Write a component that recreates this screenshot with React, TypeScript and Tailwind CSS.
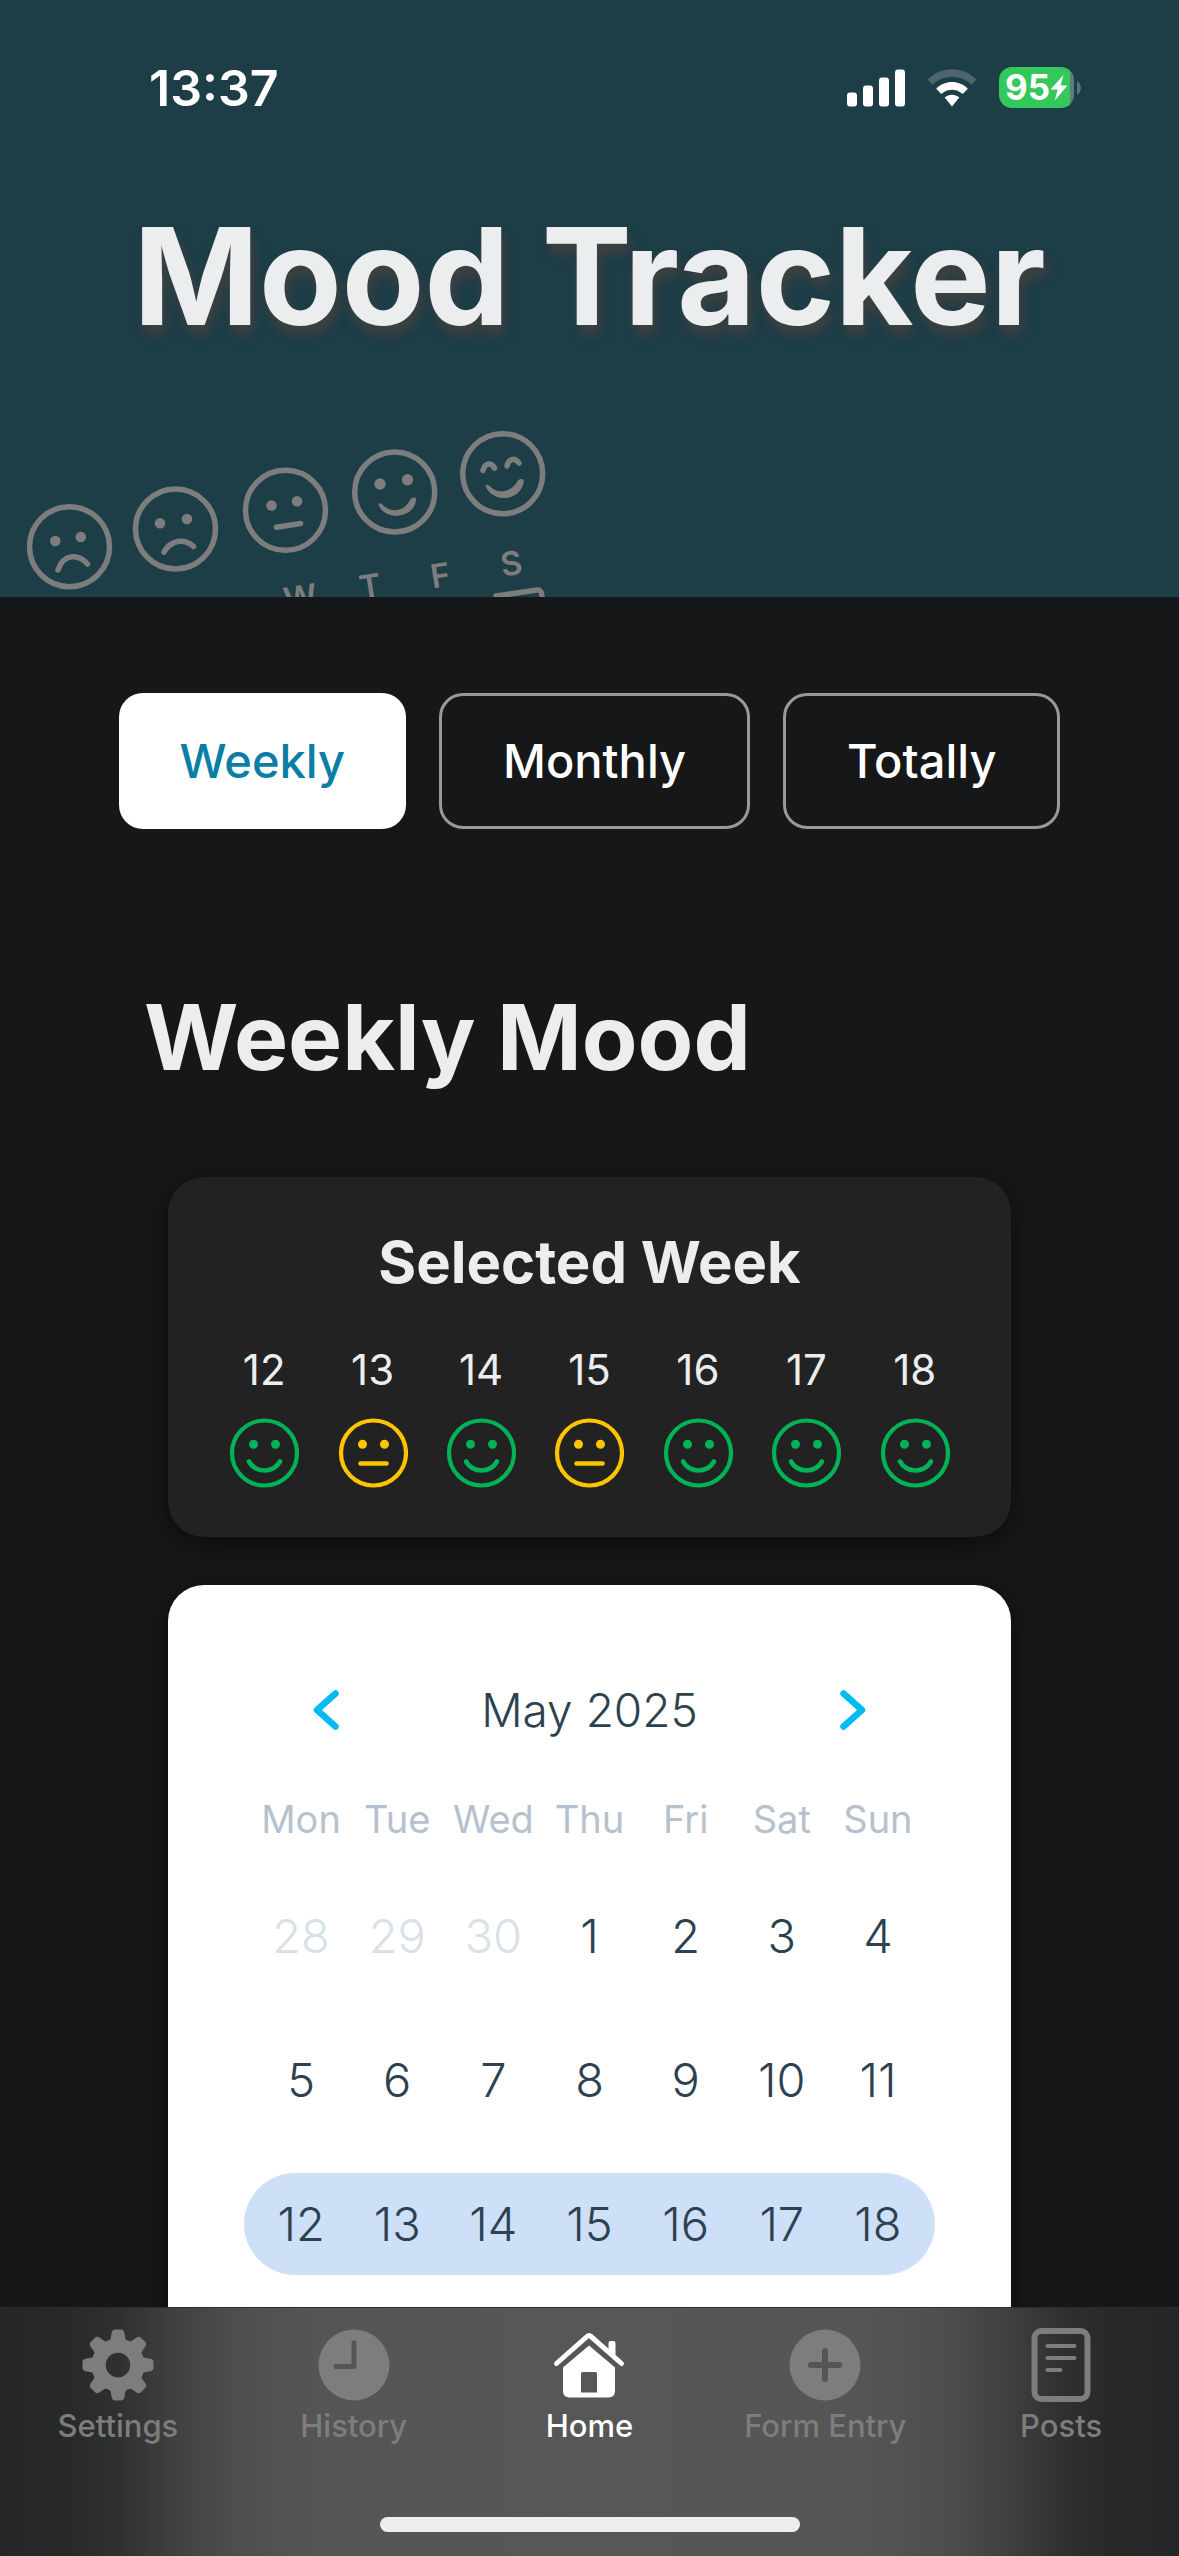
import { ReactNode } from "react";

const GREEN = "#00b356";
const YELLOW = "#ffc400";

function Face({ happy }: { happy: boolean }) {
  const color = happy ? GREEN : YELLOW;
  return (
    <svg viewBox="0 0 70 70" className="size-[70px]" aria-hidden="true" fill="none" stroke={color}>
      <circle cx="35.500" cy="35" r="32.5" strokeWidth="4.2" />
      <circle cx="24.500" cy="26.3" r="4.5" fill={color} stroke="none" />
      <circle cx="46.500" cy="26.3" r="4.5" fill={color} stroke="none" />
      {happy ? (
        <path d="M20 43.500c7 12 24 12 31 0" strokeWidth="4.600" strokeLinecap="round" />
      ) : (
        <path d="M22.500 45.500h26" strokeWidth="4.600" strokeLinecap="round" />
      )}
    </svg>
  );
}

function HeaderArt() {
  return (
    <svg viewBox="0 420 580 177" className="block h-[177px] w-[580px]" aria-hidden="true" fill="none" stroke="#7d7d7d" strokeLinecap="round" strokeLinejoin="round" strokeWidth="5.500">
      <circle cx="69.500" cy="546.700" r="40" />
      <circle cx="175.500" cy="529" r="40" />
      <circle cx="285.500" cy="510.300" r="40" />
      <circle cx="394.700" cy="492" r="40" />
      <circle cx="502.700" cy="473.700" r="40" />
      <g fill="#7d7d7d" stroke="none">
        <circle cx="55.300" cy="541" r="5.300" />
        <circle cx="80.800" cy="537" r="5.300" />
        <circle cx="160" cy="523.300" r="5.300" />
        <circle cx="187" cy="519" r="5.300" />
        <circle cx="271.500" cy="505.500" r="5.300" />
        <circle cx="297" cy="501.300" r="5.300" />
        <circle cx="380" cy="484" r="5.700" />
        <circle cx="407.500" cy="479.700" r="5.700" />
        <path d="M378.500 504c1-1.200 2.500-.8 3.800.5 5 5 9.500 6.200 14.700 5.500 6-.8 10-4.500 13.200-10.300 1.200-2.200 4.800-3 6-.8-.6 9-7.500 15.800-18 16.800-9 .8-18-4-19.700-11.700z" />
        <path d="M485.500 485.500c1-1.500 3-.8 4.500.7 4.500 4.500 8.500 5.600 14 5 5.500-.7 10-4.300 13.500-9.900 1.500-2.500 5.200-3 6.400-.8-.6 9-7.700 16.500-18.200 17.500-9 .8-18-4.500-20.200-12.500z" />
      </g>
      <path d="M58 570c5-16 20-17 29.500-6M164 552c7-12 20-14 29.500-5.500" />
      <path d="M276.500 527.300l24-3.800" />
      <path d="M483 470.500c2-8 8-8.500 11.500-2.500M507 466c2-8 8-8.500 12-3" />
      <path d="M496 596l41-6c3-.4 4.500 1 5 6l1 8" />
      <g fill="#7d7d7d" stroke="none" fontFamily="Inter, sans-serif" fontWeight="600" fontSize="33" textAnchor="middle">
        <text transform="translate(302 609) rotate(-9)">W</text>
        <text transform="translate(372 598) rotate(-9)">T</text>
        <text transform="translate(442 587) rotate(-9)">F</text>
        <text transform="translate(513 575) rotate(-9)">S</text>
      </g>
    </svg>
  );
}

function StatusBar() {
  return (
    <div className="flex h-[120px] items-end justify-between pr-[98px] pl-[149px]">
      <span className="text-[50px] leading-[64px] font-semibold text-white">13:37</span>
      <div className="flex h-[65px] items-center gap-[22px]">
        <svg viewBox="0 0 58 38" className="h-[38px] w-[58px]" fill="#fff" aria-hidden="true">
          <rect x="0" y="23.500" width="10" height="14" rx="3" />
          <rect x="16" y="16.500" width="10" height="21" rx="3" />
          <rect x="32" y="8.500" width="10" height="29" rx="3" />
          <rect x="48" y="0.500" width="10" height="37" rx="3" />
        </svg>
        <svg viewBox="0 0 50 38" className="h-[38px] w-[50px]" aria-hidden="true">
          <path d="M.6 10.600C13.500-3.300 36.500-3.300 49.400 10.600L44.500 15.800C34 5 16 5 5.500 15.800z" fill="#4d656c" />
          <path d="M9.200 19.700c8.700-8.900 22.900-8.900 31.600 0L35.700 25c-6-5.800-15.400-5.800-21.400 0z" fill="#fff" />
          <path d="M17.700 28.500c4.200-3.600 10.400-3.600 14.600 0L25 37.500z" fill="#fff" />
        </svg>
        <div className="flex items-center gap-[3px]">
          <div className="flex h-[41px] w-[75px] items-center justify-center rounded-[13px] bg-linear-to-r from-[#34c759] from-95% to-[#5f7d7b] to-95%">
            <span className="text-[35px] leading-[41px] font-bold text-white">95</span>
            <svg viewBox="0 0 18 26" className="h-[26px] w-[18px]" fill="#fff" aria-hidden="true">
              <path d="M13.500 0L.5 14.500h7L4.800 25.500 17.500 10.500h-7z" />
            </svg>
          </div>
          <svg viewBox="0 0 4 14" className="h-[14px] w-[4px]" fill="#5f7378" aria-hidden="true">
            <path d="M0 0c5 2.500 5 11.500 0 14z" />
          </svg>
        </div>
      </div>
    </div>
  );
}

const ranges = ["Weekly", "Monthly", "Totally"];
const week = [
  { day: 12, happy: true },
  { day: 13, happy: false },
  { day: 14, happy: true },
  { day: 15, happy: false },
  { day: 16, happy: true },
  { day: 17, happy: true },
  { day: 18, happy: true },
];
const weekdays = ["Mon", "Tue", "Wed", "Thu", "Fri", "Sat", "Sun"];
const rows = [
  [28, 29, 30, 1, 2, 3, 4],
  [5, 6, 7, 8, 9, 10, 11],
  [12, 13, 14, 15, 16, 17, 18],
];

function dayClass(row: number, column: number, day: number) {
  if (row === 2) {
    if (column === 0) return "-ml-[9px] block h-[102px] w-[calc(100%+9px)] rounded-l-[51px] bg-[#cde0f8] pl-[9px]";
    if (column === 6) return "-mr-[9px] block h-[102px] w-[calc(100%+9px)] rounded-r-[51px] bg-[#cde0f8] pr-[9px]";
    return "block h-[102px] w-full bg-[#cde0f8]";
  }
  if (row === 0 && day > 20) return "block h-[102px] w-full text-[#d9e1e8]";
  return "block h-[102px] w-full";
}

function Chevron({ d }: { d: string }) {
  return (
    <svg viewBox="0 0 26 40" className="h-[40px] w-[26px]" fill="none" stroke="#00bbf2" strokeWidth="6.500" strokeLinecap="round" strokeLinejoin="round" aria-hidden="true">
      <path d={d} />
    </svg>
  );
}

function Calendar() {
  return (
    <section className="rounded-[36px] bg-white px-[85px] pt-[93px] pb-[96px] text-[#2d4150] shadow-[0_6px_24px_rgba(0,0,0,0.5)]">
      <div className="flex h-[64px] items-center justify-between px-[60px]">
        <button type="button" aria-label="Previous month"><Chevron d="M22.500 3.500L4 20l18.500 16.500" /></button>
        <h3 className="text-[46px] leading-[64px] font-light">May 2025</h3>
        <button type="button" aria-label="Next month"><Chevron d="M3.500 3.500L22 20 3.500 36.500" /></button>
      </div>
      <table className="mt-[54px] w-full table-fixed border-separate border-spacing-0 text-center">
        <thead>
          <tr className="text-[38px] leading-[47px] text-[#b6c1cd]">
            {weekdays.map((d) => (
              <th key={d} scope="col" className="p-0 font-normal">{d}</th>
            ))}
          </tr>
        </thead>
        <tbody>
          {rows.map((row, r) => (
            <tr key={r} className="text-[47px] leading-[102px] font-light">
              {row.map((d, c) => (
                <td key={c} className="p-0 pt-[42px]">
                  <button type="button" className={dayClass(r, c, d)}>{d}</button>
                </td>
              ))}
            </tr>
          ))}
        </tbody>
      </table>
    </section>
  );
}

function Tab({ label, active, children }: { label: string; active?: boolean; children: ReactNode }) {
  return (
    <a href="#" aria-current={active ? "page" : undefined} className={"flex flex-1 flex-col items-center pt-[18px] " + (active ? "text-white" : "text-[#7d7d7d]")}>
      <svg viewBox="0 0 78 78" className="size-[78px]" fill="currentColor" aria-hidden="true">{children}</svg>
      <span className="mt-[4px] text-[31px] leading-[36px] font-medium">{label}</span>
    </a>
  );
}

const teeth = [0, 45, 90, 135, 180, 225, 270, 315];

export default function App() {
  return (
    <div className="flex h-screen flex-col overflow-hidden bg-[#151718] font-[Inter,sans-serif]">
      <div className="min-h-0 flex-1 overflow-hidden">
        <header className="overflow-hidden bg-[#1d3d47]">
          <StatusBar />
          <h1 className="pt-[66px] text-center text-[135px] leading-[180px] font-bold text-[#ecedee] [text-shadow:3px_9px_12px_rgba(80,65,60,0.7)]">Mood Tracker</h1>
          <div className="mt-[54px]"><HeaderArt /></div>
        </header>
        <main>
          <div className="mt-[96px] flex justify-center gap-[33px]">
            {ranges.map((label, i) => (
              <button
                key={label}
                type="button"
                className={
                  "h-[136px] rounded-[24px] px-[61px] text-[47px] leading-[60px] font-medium " +
                  (i === 0 ? "bg-white text-[#0a7ea4]" : "border-[3px] border-[#999] text-white")
                }
              >
                {label}
              </button>
            ))}
          </div>
          <h2 className="mt-[148px] px-[144px] text-[91px] leading-[120px] font-bold text-[#ecedee]">Weekly Mood</h2>
          <div className="mx-[168px] mt-[80px] flex flex-col gap-[48px]">
            <section className="h-[360px] rounded-[36px] bg-[#222] px-[42px] pt-[48px] text-[#ecedee] shadow-[0_6px_24px_rgba(0,0,0,0.5)]">
              <h3 className="text-center text-[58px] leading-[74px] font-bold">Selected Week</h3>
              <ul className="mt-[44px] grid grid-cols-7">
                {week.map((w) => (
                  <li key={w.day} className="flex flex-col items-center gap-[21px]">
                    <span className="text-[42px] leading-[54px]">{w.day}</span>
                    <Face happy={w.happy} />
                  </li>
                ))}
              </ul>
            </section>
            <Calendar />
          </div>
        </main>
      </div>
      <nav className="h-[249px] shrink-0 border-t border-[#2a2c2c] bg-[linear-gradient(90deg,#242627_0%,#282a2a_6%,#2f3130_10%,#404140_15%,#4d4e4d_20%,#545554_27%,#565756_50%,#545554_73%,#4d4e4d_80%,#404140_85%,#2f3130_90%,#282a2a_94%,#242627_100%)]">
        <div className="flex">
          <Tab label="Settings">
            <path fillRule="evenodd" d="M39 12.500a26.500 26.500 0 1 0 0 53 26.500 26.500 0 0 0 0-53zm0 14.200a12.300 12.300 0 1 1 0 24.600 12.300 12.300 0 0 1 0-24.600z" />
            {teeth.map((a) => (
              <path key={a} transform={`rotate(${a} 39 39)`} d="M29 17q2-2 2.700-5l1-5.500Q33.500 3.500 36 3.500h6q2.500 0 3.300 3l1 5.500q.7 3 2.700 5z" />
            ))}
          </Tab>
          <Tab label="History">
            <path fillRule="evenodd" d="M39 3.500a35.500 35.500 0 1 0 0 71 35.500 35.500 0 0 0 0-71zm0 11a2.500 2.500 0 0 1 2.500 2.500v23.500a2.500 2.500 0 0 1-2.500 2.500H21a2.500 2.500 0 0 1 0-5h15.500V17a2.500 2.500 0 0 1 2.500-2.500z" />
          </Tab>
          <Tab label="Home" active>
            <path d="M6.500 37.500L37 10.500q2-1.700 4 0l30.500 27" fill="none" stroke="currentColor" strokeWidth="5" strokeLinecap="round" strokeLinejoin="round" />
            <path d="M58.500 27V17a2 2 0 0 1 2-2h3a2 2 0 0 1 2 2v17z" />
            <path fillRule="evenodd" d="M39 19.500L13 41.500v23q0 7 6.500 7h39q6.500 0 6.500-7v-23zM32.500 46h13q1.500 0 1.500 1.500V66.500H31v-19q0-1.500 1.500-1.500z" />
          </Tab>
          <Tab label="Form Entry">
            <path fillRule="evenodd" d="M39 3.500a35.500 35.500 0 1 0 0 71 35.500 35.500 0 0 0 0-71zm0 18.500a3 3 0 0 1 3 3v11h11a3 3 0 0 1 0 6H42v11a3 3 0 0 1-6 0V42H25a3 3 0 0 1 0-6h11V25a3 3 0 0 1 3-3z" />
          </Tab>
          <Tab label="Posts">
            <g fill="none" stroke="currentColor" strokeLinecap="round">
              <rect x="12.500" y="5" width="53" height="68" rx="7" strokeWidth="6" />
              <path d="M25.500 20h27M25.500 32h27M25.500 44h13" strokeWidth="4" />
            </g>
          </Tab>
        </div>
        <div className="mx-auto mt-[73px] h-[15px] w-[420px] rounded-full bg-[#eee]" />
      </nav>
    </div>
  );
}
